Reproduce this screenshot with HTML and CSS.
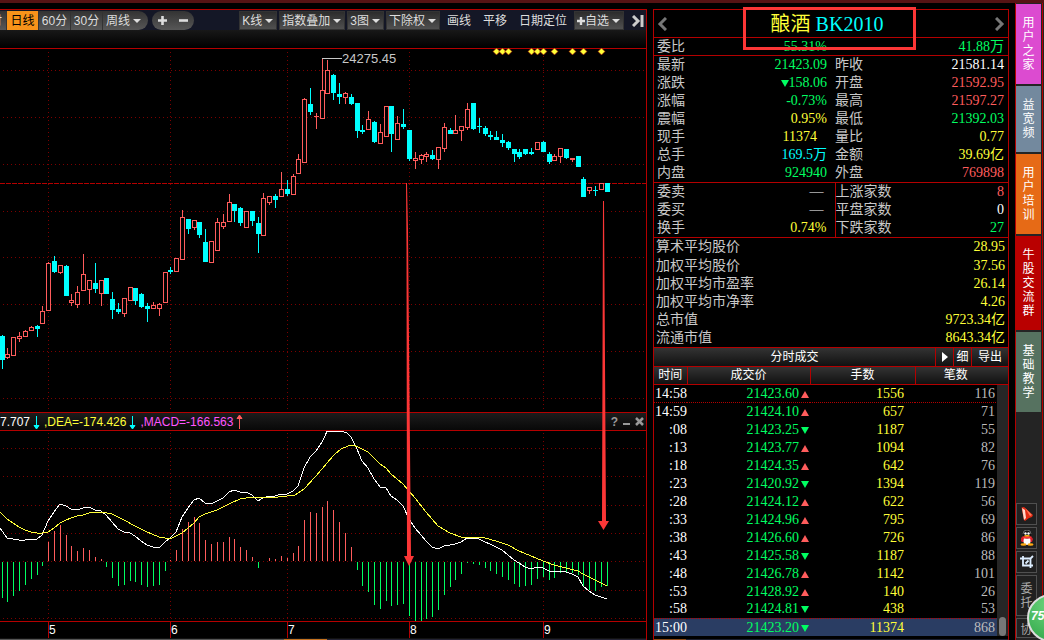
FILE: index.html
```html
<!DOCTYPE html>
<html lang="zh-CN">
<head>
<meta charset="utf-8">
<title>酿酒 BK2010</title>
<link rel="stylesheet" href="styles.css">
</head>
<body>
<div class="app">
  <main class="charts">
    <nav class="toolbar">
      <div class="group periods">
        <button class="tool cut">时</button>
        <button class="tool active">日线</button>
        <button class="tool">60分</button>
        <button class="tool">30分</button>
        <button class="tool last">周线<i class="caret"></i></button>
      </div>
      <div class="group pill">
        <button class="tool" aria-label="放大"><svg width="9" height="9"><path d="M4.5 0v9M0 4.5h9" stroke="#ddd" stroke-width="2.6"/></svg></button>
        <button class="tool" aria-label="缩小"><svg width="9" height="9"><path d="M0 4.5h9" stroke="#ddd" stroke-width="2.6"/></svg></button>
      </div>
      <div class="actions">
        <button class="tool box">K线<i class="caret"></i></button>
        <button class="tool box">指数叠加<i class="caret"></i></button>
        <button class="tool box">3图<i class="caret"></i></button>
        <button class="tool box">下除权<i class="caret"></i></button>
        <button class="tool flat">画线</button>
        <button class="tool flat">平移</button>
        <button class="tool flat">日期定位</button>
        <button class="tool box"><svg width="8" height="8"><path d="M4 0v8M0 4h8" stroke="#ddd" stroke-width="2.4"/></svg>自选<i class="caret"></i></button>
        <button class="tool collapse" aria-label="收起"><svg width="12" height="12"><path d="M1 1l5 5-5 5M10 0v12" fill="none" stroke="#ccc" stroke-width="3"/></svg></button>
      </div>
    </nav>
    <div class="shade"></div>
    <div class="plots">
      <svg class="plot" id="price" viewBox="0 49 646 363">
        <g id="price-grid" class="grid"></g>
        <path class="now" d="M0 183.5H646"/>
        <g id="candles"></g>
        <path d="M322 58.5H342" stroke="#c8c8c8"/>
        <text class="peak" x="342" y="63">24275.45</text>
        <g id="marks"></g>
      </svg>
      <div class="indicator">
        <span class="white">7.707</span><svg width="7" height="16"><path d="M3.5 2v11M1 11.500h5L3.500 15z" stroke="#0ff" fill="#0ff"/></svg>
        <span class="yellow dea">,DEA=-174.426</span><svg width="7" height="16"><path d="M3.500 2v11M1 11.500h5L3.500 15z" stroke="#0ff" fill="#0ff"/></svg>
        <span class="magenta macd">,MACD=-166.563</span><svg class="up" width="7" height="16"><path d="M3.500 15V3M1 4.500h5L3.500 1z" stroke="#ff5c5c" fill="#ff5c5c"/></svg>
        <div class="controls">
          <button class="tool" aria-label="帮助">?</button>
          <button class="tool" aria-label="最小化"><svg width="7" height="9"><path d="M0 7h7" stroke="#999" stroke-width="2"/></svg></button>
          <button class="tool" aria-label="关闭"><svg width="9" height="9"><path d="M1 1l7 7M8 1L1 8" stroke="#999" stroke-width="2.500"/></svg></button>
        </div>
      </div>
      <svg class="plot" id="macd" viewBox="0 431 646 207">
        <g id="macd-grid" class="grid"></g>
        <g id="bars"></g>
        <polyline class="dif" points="0,528 7,538 13,539 19,540 25,540 31,539 37,539 42,535 48,521 54,512 60,504 66,506 71,509 77,510 83,508 89,507 95,510 101,511 106,515 112,522 118,529 124,532 130,533 135,536 141,541 147,545 153,547 159,548 165,542 170,538 176,532 182,517 188,508 194,500 199,498 205,503 211,504 217,501 223,498 229,492 234,490 240,492 246,492 252,495 258,501 263,498 269,496 275,496 281,494 287,494 293,491 298,486 304,468 310,457 316,451 322,442 327,431.5 343,431.5 347,433 351,437 357,449 362,461 368,468 374,479 380,487 386,488 391,496 397,500 403,506 409,519 415,528 421,535 426,541 432,547 438,549 444,546 450,545 455,544 461,542 467,538 473,538 479,539 485,542 490,544 496,547 502,550 508,555 514,560 519,563 525,567 531,569 537,567 543,568 549,571 554,572 560,571 566,572 572,574 578,577 583,586 589,591 595,595 601,597 607,599"/>
        <polyline class="dea-line" points="0,512 7,519 13,523 19,527 25,530 31,532 37,533 42,533 48,532 54,528 60,523 66,520 71,518 77,516 83,515 89,513 101,512 107,513 112,514 118,517 124,520 135,526 147,532 159,537 165,538 172,538 182,533 188,528 194,523 199,517 205,514 217,510 229,504 240,499 252,497 269,498 287,496 295,495 304,489 316,476 327,463 334,455 341,449 348,446 353,445 358,447 368,452 380,464 386,468 391,474 403,484 409,491 415,498 426,512 438,526 450,533 461,537 479,537 485,538 496,541 508,545 519,551 531,556 543,561 554,565 566,568 578,571 583,574 595,580 607,586"/>
        <path d="M0 621.5H646M48.500 622v16M170.500 622v16M287.500 622v16M409.500 622v16M543.500 622v16" stroke="#b40000"/>
        <g class="months"><text x="49" y="634">5</text><text x="171" y="634">6</text><text x="288" y="634">7</text><text x="410" y="634">8</text><text x="544" y="634">9</text></g>
      </svg>
      <svg class="arrows" viewBox="0 49 646 589">
        <path d="M406 183h1L408 230 411 556h3L409 566 404 556h3L406.500 250zM603 201h1L606 521h3L603.500 530 598 521h4z"/>
      </svg>
    </div>
    <div class="taskline"></div>
  </main>

  <aside class="quote">
    <header class="title">
      <button class="tool" aria-label="上一个"><svg width="10" height="14"><path d="M9 1L3 7l6 6" fill="none" stroke="#777" stroke-width="3"/></svg></button>
      <h1><span>酿酒</span> <b>BK2010</b></h1>
      <button class="tool" aria-label="下一个"><svg width="10" height="14"><path d="M1 1l6 6-6 6" fill="none" stroke="#777" stroke-width="3"/></svg></button>
      <div class="highlight"></div>
    </header>
    <table class="facts">
      <tbody>
        <tr><th>委比</th><td class="green">55.31%</td><th></th><td class="green">41.88万</td></tr>
      </tbody>
      <tbody>
        <tr><th>最新</th><td class="green">21423.09</td><th>昨收</th><td class="white">21581.14</td></tr>
        <tr><th>涨跌</th><td class="green"><i class="down"></i>158.06</td><th>开盘</th><td class="red">21592.95</td></tr>
        <tr><th>涨幅</th><td class="green">-0.73%</td><th>最高</th><td class="red">21597.27</td></tr>
        <tr><th>震幅</th><td class="yellow">0.95%</td><th>最低</th><td class="green">21392.03</td></tr>
        <tr><th>现手</th><td class="yellow inset">11374</td><th>量比</th><td class="yellow">0.77</td></tr>
        <tr><th>总手</th><td class="cyan">169.5万</td><th>金额</th><td class="yellow">39.69亿</td></tr>
        <tr><th>内盘</th><td class="green">924940</td><th>外盘</th><td class="red">769898</td></tr>
      </tbody>
      <tbody class="split">
        <tr><th>委卖</th><td class="white dash">—</td><th>上涨家数</th><td class="red">8</td></tr>
        <tr><th>委买</th><td class="white dash">—</td><th>平盘家数</th><td class="white">0</td></tr>
        <tr><th>换手</th><td class="yellow">0.74%</td><th>下跌家数</th><td class="green">27</td></tr>
      </tbody>
    </table>
    <table class="summary">
      <tr><th>算术平均股价</th><td>28.95</td></tr>
      <tr><th>加权平均股价</th><td>37.56</td></tr>
      <tr><th>加权平均市盈率</th><td>26.14</td></tr>
      <tr><th>加权平均市净率</th><td>4.26</td></tr>
      <tr><th>总市值</th><td>9723.34亿</td></tr>
      <tr><th>流通市值</th><td>8643.34亿</td></tr>
    </table>
    <div class="ticks-bar">
      <h2>分时成交</h2>
      <button class="tool play" aria-label="播放"><i class="right"></i></button>
      <button class="tool">细</button>
      <button class="tool export">导出</button>
    </div>
    <div class="ticks">
      <table>
        <thead><tr><th class="c-time">时间</th><th class="c-price">成交价</th><th class="c-lots">手数</th><th>笔数</th></tr></thead>
        <tbody>
          <tr class="mark"><td>14:58</td><td>21423.60<i class="rise"></i></td><td>1556</td><td>116</td></tr>
          <tr><td>14:59</td><td>21424.10<i class="rise"></i></td><td>657</td><td>71</td></tr>
          <tr><td>:08</td><td>21423.25<i class="down"></i></td><td>1187</td><td>55</td></tr>
          <tr><td>:13</td><td>21423.77<i class="rise"></i></td><td>1094</td><td>82</td></tr>
          <tr><td>:18</td><td>21424.35<i class="rise"></i></td><td>642</td><td>76</td></tr>
          <tr><td>:23</td><td>21420.92<i class="down"></i></td><td>1394</td><td>119</td></tr>
          <tr><td>:28</td><td>21424.12<i class="rise"></i></td><td>622</td><td>56</td></tr>
          <tr><td>:33</td><td>21424.96<i class="rise"></i></td><td>795</td><td>69</td></tr>
          <tr><td>:38</td><td>21426.60<i class="rise"></i></td><td>726</td><td>86</td></tr>
          <tr><td>:43</td><td>21425.58<i class="down"></i></td><td>1187</td><td>88</td></tr>
          <tr><td>:48</td><td>21426.78<i class="rise"></i></td><td>1142</td><td>101</td></tr>
          <tr><td>:53</td><td>21428.92<i class="rise"></i></td><td>140</td><td>26</td></tr>
          <tr class="mark"><td>:58</td><td>21424.81<i class="down"></i></td><td>438</td><td>53</td></tr>
          <tr class="selected"><td>15:00</td><td>21423.20<i class="down"></i></td><td>11374</td><td>868</td></tr>
        </tbody>
      </table>
      <div class="track"><div class="thumb"></div></div>
    </div>
    <div class="foot"></div>
  </aside>

  <nav class="side">
    <button class="tab pink"><span>用户之家</span></button>
    <button class="tab steel"><span>益宽频</span></button>
    <button class="tab orange"><span>用户培训</span></button>
    <button class="tab crimson"><span>牛股交流群</span></button>
    <button class="tab moss"><span>基础教学</span></button>
    <div class="shortcuts">
      <button class="short" aria-label="指针"><svg width="14" height="16"><path d="M1.500 1.500L4 1l9 8-1 2-3 1-4 3-1-1z" fill="#e22a12"/><path d="M2 2l3 2 1 8-2 2z" fill="#ffd9cc"/><path d="M5 2l7 7-2 1z" fill="#ff7a5c"/></svg></button>
      <button class="short" aria-label="QQ"><svg width="14" height="16"><path d="M1 8l2-2h8l2 3-1 3H2l-1-1z" fill="#d81e28"/><ellipse cx="7" cy="11" rx="3.500" ry="4" fill="#fff"/><ellipse cx="7" cy="4.500" rx="4" ry="4" fill="#111"/><path d="M3 4a4 4 0 0 1 8 0" fill="none" stroke="#666"/><circle cx="5.500" cy="3.500" r="1.200" fill="#fff"/><circle cx="8.500" cy="3.500" r="1.200" fill="#fff"/><ellipse cx="7" cy="6" rx="3" ry="1" fill="#fb1"/><path d="M3 7.500h8" stroke="#f33" stroke-width="2"/><ellipse cx="3.500" cy="14.500" rx="3" ry="1.300" fill="#fa1"/><ellipse cx="10.500" cy="14.500" rx="3" ry="1.300" fill="#fa1"/></svg></button>
      <button class="short" aria-label="截图"><svg width="14" height="14"><path d="M0 3.500h10.500V11M3 1v9.500h10M10.500 3.500L13 1M5.500 8.500l3-3M10.500 11v2" fill="none" stroke="#def" stroke-width="1.800"/></svg></button>
      <button class="short tall"><span>委托</span></button>
      <button class="short tall"><span>协</span></button>
    </div>
    <div class="ball">75</div>
  </nav>
</div>
<script src="chart.js"></script>
</body>
</html>
```
FILE: styles.css
```css
* { box-sizing: border-box; }
body {
  margin: 0;
  background: #000;
  color: #ccc;
  font: 12px/18px "Liberation Sans", "Noto Sans CJK SC", sans-serif;
  overflow: hidden;
}
button {
  margin: 0;
  padding: 0;
  border: 0;
  background: none;
  color: inherit;
  font: inherit;
  cursor: pointer;
}
table { border-collapse: collapse; border-spacing: 0; width: 100%; }
th, td { padding: 0; font-weight: normal; }
h1, h2 { margin: 0; font-weight: normal; }

.app {
  display: grid;
  grid-template-columns: minmax(0, 1fr) 356px 29px;
  column-gap: 6px;
  border-top: 3px solid #561314;
}
.white { color: #fff; }
.green { color: #00ff62; }
.red { color: #ff5c5c; }
.yellow { color: #ffff38; }
.cyan { color: #0ff; }
.magenta { color: #ff55ff; }

/* chart column */
.charts {
  margin-top: 6px;
  border-top: 1px solid #b40000;
  border-right: 1px solid #b40000;
}
.toolbar {
  display: flex;
  align-items: center;
  height: 20px;
  padding-top: 1px;
  background: #141726;
}
.group { display: flex; background: linear-gradient(#333, #575757); height: 19px; }
.tool { display: inline-flex; align-items: center; justify-content: center; white-space: nowrap; }
.toolbar .tool { height: 19px; color: #ddd; line-height: 18px; }
.periods { border-radius: 0 10px 10px 0; }
.periods .tool { width: 32px; border-right: 1px solid #333; }
.periods .cut { width: 7px; overflow: hidden; justify-content: flex-end; padding-right: 4px; }
.toolbar .active { background: #f7931a; color: #000; }
.periods .last { width: 45px; border-right: 0; padding-right: 4px; }
.pill { width: 42px; margin-left: 4px; border-radius: 10px; justify-content: space-around; }
.caret { border: 4px solid transparent; border-top-color: #ddd; border-bottom: 0; margin-left: 3px; }
.actions { display: flex; margin-left: auto; gap: 2px; }
.actions .box { padding: 0 3px 0 2px; background: linear-gradient(#2c2c2c, #505050); border: 1px solid #333; }
.actions .flat { padding: 0 5px; }
.actions .collapse { padding: 0 2px 0 6px; }
.shade { height: 19px; background: linear-gradient(#181818, #000); border-bottom: 1px solid #b40000; }
.plots { position: relative; }
.plot { display: block; width: 100%; height: auto; overflow: visible; }
.grid path { stroke: #7c0000; stroke-dasharray: 1 3; }
.now { stroke: #b40000; stroke-dasharray: 5 1; }
.peak { fill: #c8c8c8; font-size: 13px; }
.months { fill: #fff; font-size: 12px; }
.dif, .dea-line { fill: none; stroke: #fff; shape-rendering: crispEdges; }
.dea-line { stroke: #ffff38; }
.arrows { position: absolute; inset: 0; width: 100%; height: 100%; fill: #fb3636; pointer-events: none; }
.indicator {
  display: flex;
  align-items: center;
  height: 19px;
  border: solid #b40000;
  border-width: 1px 0;
  background: linear-gradient(#1c1c1c, #080808);
}
.indicator svg { margin-left: 3px; flex: none; }
.dea, .macd { margin-left: 4px; }
.indicator .controls { display: flex; gap: 5px; margin-left: auto; padding-right: 2px; color: #999; font-weight: bold; }
.indicator .controls svg { margin: 0; }
.taskline { height: 2px; border-top: 1px solid #111; background: linear-gradient(90deg, #555 0 284px, #c47220 284px 327px, #223 327px); }

/* quote column */
.quote { margin-top: 6px; border: solid #b40000; border-width: 1px 1px 0; font-family: "Liberation Serif", "Noto Sans CJK SC", serif; font-size: 14px; }
.title { position: relative; display: flex; align-items: center; justify-content: space-between; height: 27px; padding: 0 3px; }
.title h1 { padding-right: 8px; font-size: 20px; line-height: 26px; color: #ffff38; }
.title b { font-weight: normal; color: #0ff; }
.highlight { position: absolute; left: 89px; top: -3px; width: 173px; height: 43px; border: 3px solid #fb3636; }
.facts tbody { border-top: 1px solid #b40000; }
.facts tr, .summary tr { height: 18px; }
.facts tr > :nth-child(1) { width: 60px; padding-left: 3px; }
.facts tr > :nth-child(2) { width: 121px; padding-right: 8px; }
.facts tr > :nth-child(3) { width: 73px; }
.facts td:last-child { padding-right: 4px; }
.facts th, .summary th { text-align: left; color: #c8c8c8; white-space: nowrap; line-height: 18px; }
.facts td, .summary td { text-align: right; white-space: nowrap; line-height: 18px; }
.facts tbody:first-child tr { height: 17px; }
.facts tbody:first-child :is(td, th) { line-height: 17px; }
.facts tr > td.inset { padding-right: 18px; }
.facts tr > td.dash { padding-right: 11px; }
.facts .split th:nth-child(3) { border-left: 1px solid #b40000; }
.summary { border-top: 1px solid #b40000; border-bottom: 1px solid #b40000; }
.summary th { padding-left: 2px; }
.summary td { padding-right: 3px; color: #ffff38; }
.summary tr:first-child { height: 19px; }
.down, .rise, .right { display: inline-block; border: 4px solid transparent; }
.down { border-top: 7px solid #00ff62; border-bottom: 0; }
.rise { border-bottom: 7px solid #ff5c5c; border-top: 0; }
.right { border-left: 6px solid #fff; border-right: 0; border-width: 5px 0 5px 6px; }
.ticks-bar { display: flex; height: 19px; border-bottom: 1px solid #b40000; background: linear-gradient(#333, #111); color: #fff; font-size: 12px; }
.ticks-bar h2 { flex: 1; text-align: center; font-size: 12px; line-height: 18px; }
.ticks-bar .tool { width: 18px; border-left: 1px solid #b40000; }
.ticks-bar .export { width: 37px; }
.ticks { position: relative; }
.ticks table { table-layout: fixed; }
.ticks thead { background: linear-gradient(#333, #111); border-bottom: 1px solid #b40000; }
.ticks thead th { height: 17px; line-height: 17px; font-size: 12px; color: #fff; border-right: 1px solid #b40000; }
.ticks thead th:last-child { border-right: 0; padding-right: 12px; }
.c-time { width: 33px; }
.c-price { width: 123px; }
.c-lots { width: 105px; }
.ticks tbody tr { height: 18px; }
.ticks td { text-align: right; line-height: 17px; height: 18px; color: #fff; white-space: nowrap; }
.ticks td:nth-child(2) { padding-right: 1px; color: #00ff62; }
.ticks td:nth-child(3) { padding-right: 11px; color: #ffff38; }
.ticks td:nth-child(4) { padding-right: 13px; color: #bbb; }
.ticks i { margin-left: 2px; }
.ticks .mark { border-bottom: 1px dotted #b40000; }
.ticks .selected { background: #2a3d63; }
.track { position: absolute; right: 0; top: 18px; bottom: 0; width: 11px; padding: 0 2px; background: #262626; display: flex; align-items: flex-end; }
.thumb { width: 8px; height: 19px; border-radius: 4px; background: #777; }
.foot { height: 4px; background: linear-gradient(90deg, #8a4a18 0 32px, #1c2030 32px) 0 3px / 100% 1px no-repeat; }

/* side column */
.side {
  position: relative;
  display: flex;
  flex-direction: column;
  gap: 2px;
  padding: 1px 1px 0 0;
  border-left: 1px solid #b40000;
  background: linear-gradient(90deg, #242424 26px, #b40000 26px 27px, #222 27px);
}
.tab { display: flex; align-items: center; justify-content: center; width: 25px; padding: 12px 0; color: #fff; }
.tab span, .tall span { display: block; width: 13px; line-height: 14px; word-break: break-all; }
.pink { background: #dc4bd0; height: 80px; }
.steel { background: #73899e; height: 66px; }
.orange { background: #e66a16; height: 80px; }
.crimson { background: #b90000; height: 94px; }
.moss { background: #567260; height: 80px; }
.shortcuts { display: flex; flex-direction: column; gap: 2px; margin-top: 89px; }
.short { display: flex; align-items: center; justify-content: center; width: 21px; height: 22px; border: 1px solid #505050; background: #202020; color: #aaa; }
.tall { height: 41px; }
.tall:last-child { height: 20px; align-items: flex-start; padding-top: 4px; }
.ball {
  position: absolute;
  left: 11px;
  top: 591px;
  width: 48px;
  height: 48px;
  border: 2px solid #ddd;
  border-radius: 50%;
  background: radial-gradient(circle at 50% 20%, #6fd67f, #2fa648);
  color: #fff;
  font: italic bold 12px/40px "Liberation Sans", sans-serif;
  padding-left: 2px;
}
```
FILE: chart.js
```js
const NS = 'http://www.w3.org/2000/svg';
const RISE = '#ff5c5c', FALL = '#00ffff';

function add(parent, tag, attrs) {
  const el = document.createElementNS(NS, tag);
  for (const key in attrs) el.setAttribute(key, attrs[key]);
  document.getElementById(parent).appendChild(el);
}
const slot = i => Math.floor(2.15 + i * 64 / 11);

// direction, high, body top, body bottom, low
const candles = `d335 336 360 369,u348 354 358 359,u337 337 356 356,u332 336 339 342,u330 331 337 337,u326 327 331 331,d325 326 329 337,u306 311 324 324,u262 263 311 311,d256 261 272 273,u265 265 273 274,d265 266 296 296,u294 300 303 306,u286 292 305 308,u254 274 291 291,u280 280 290 304,d263 283 289 293,u280 280 294 306,d278 278 294 294,d292 299 310 319,d303 309 312 314,u298 298 314 317,u287 287 301 301,d288 288 301 305,d293 294 307 308,d303 306 309 322,u302 305 309 309,u303 304 309 316,u272 272 303 303,d267 270 272 274,u258 258 272 272,u210 217 260 260,d219 219 229 234,u220 220 228 230,d222 222 235 238,d229 242 262 262,u241 241 263 263,u218 222 251 251,u214 222 227 229,u194 202 222 222,d204 204 211 222,d207 208 223 226,u211 211 228 228,d211 211 221 226,d217 223 234 253,u193 198 236 236,u196 196 203 205,d194 196 200 208,u172 189 197 197,d180 189 194 196,u174 176 195 195,u154 159 174 174,u98 99 163 163,d88 104 112 115,u113 116 117 129,u58 90 119 119,u60 70 94 94,d74 75 93 100,d83 94 97 104,u92 93 98 104,d94 97 104 105,d103 103 131 138,d125 130 132 134,u111 119 130 130,d121 122 142 143,u124 132 144 144,u106 106 137 137,d106 106 134 152,u116 123 140 140,d109 124 127 129,d130 130 159 161,u152 158 161 169,u154 155 160 164,u152 154 157 162,d150 155 159 160,u147 147 160 169,u123 127 149 152,d128 130 134 134,u115 130 134 134,u126 126 131 141,u103 109 128 130,d103 103 129 130,d118 126 127 133,d126 128 134 136,d131 135 137 140,d131 137 140 140,d134 140 143 147,d141 142 148 150,d149 149 154 162,d149 152 157 159,d149 149 154 155,d148 152 154 155,u142 142 150 150,d141 142 152 152,d152 154 162 164,u154 156 161 161,u148 148 157 163,d149 149 158 159,u158 158 160 162,d156 156 167 167,d177 179 197 197,u187 187 191 194,d186 190 191 196,u183 183 190 190,d183 183 192 192`.split(',');

candles.forEach((row, i) => {
  const [high, top, bottom, low] = row.slice(1).split(' ').map(Number);
  const x = slot(i), rising = row[0] === 'u';
  const color = rising ? RISE : FALL;
  if (top > high) add('candles', 'rect', { x, y: high, width: 1, height: top - high, fill: color });
  if (low > bottom) add('candles', 'rect', { x, y: bottom, width: 1, height: low - bottom, fill: color });
  if (rising && bottom - top > 2) {
    add('candles', 'rect', { x: x - 1.5, y: top + 0.5, width: 4, height: bottom - top - 1, fill: '#000', stroke: color });
  } else {
    add('candles', 'rect', { x: x - 2, y: top, width: 5, height: bottom - top, fill: color });
  }
});

const bars = [-36, -40, -34, -29, -23, -17, -13, -4, 19, 30, 36, 26, 15, 10, 13, 11, 4, 2, -5, -16, -24, -23, -19, -20, -23, -25, -24, -23, -9, 1, 11, 32, 39, 44, 38, 21, 17, 19, 19, 24, 22, 14, 11, 4, -6, 0, 3, 2, 5, 3, 8, 15, 41, 49, 48, 54, 60, 51, 39, 28, 14, -8, -24, -30, -43, -47, -39, -44, -43, -42, -54, -59, -59, -57, -55, -48, -33, -25, -18, -12, -1, -2, -3, -6, -9, -12, -15, -18, -22, -25, -24, -23, -17, -15, -18, -16, -11, -11, -11, -13, -25, -28, -29, -25, -24];
bars.forEach((v, i) => add('bars', 'rect', {
  x: slot(i), y: v > 0 ? 561 - v : 562, width: 1, height: Math.abs(v), fill: v > 0 ? RISE : '#00ff62'
}));

for (const y of [70, 117, 164, 211, 257, 304, 351, 398]) add('price-grid', 'path', { d: `M3 ${y}.5H646` });
for (const y of [448, 476, 505, 533, 561, 590, 618]) add('macd-grid', 'path', { d: `M3 ${y}.5H646` });
for (const x of [48, 170, 287, 409, 543]) {
  add('price-grid', 'path', { d: `M${x}.5 52V412` });
  add('macd-grid', 'path', { d: `M${x}.5 433V621` });
}
for (const x of [496, 502, 508, 531, 537, 543, 554, 572, 583, 601]) {
  add('marks', 'path', { d: `M${x - 3} 51.5l3.5 -3.5 3.5 3.5-3.5 3.5z`, fill: '#ffff38', stroke: '#900', 'stroke-width': 0.6 });
}
```
